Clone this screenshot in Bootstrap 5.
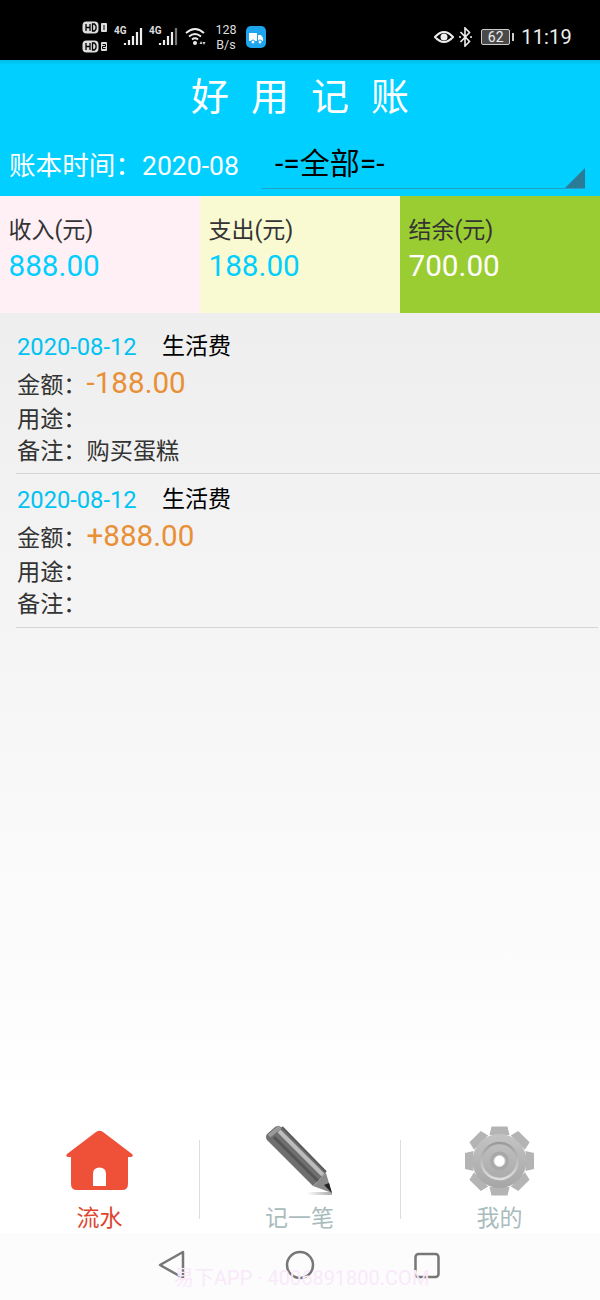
<!DOCTYPE html>
<html lang="zh">
<head>
<meta charset="UTF-8" />
<meta name="viewport" content="width=device-width, initial-scale=1" />
<title>好用记账</title>
<link href="https://cdn.jsdelivr.net/npm/bootstrap@5.3.0/dist/css/bootstrap.min.css" rel="stylesheet" />
<style>
  html, body { height: 1300px; }
  body {
    width: 600px;
    overflow: hidden;
    position: relative;
    font-family: Roboto, "Noto Sans CJK SC", sans-serif;
    background: #fff;
  }
  .status-bar { height: 60px; background: #000; color: #fff; padding: 14px 28px 0 82px; }
  .hd-col { width: 28px; gap: 6px; }
  .net-speed { font-size: 12.5px; line-height: 15px; width: 24px; margin-left: 6px; color: #ddd; text-align: center; }
  .clock { font-size: 20px; letter-spacing: .2px; color: #eee; line-height: 1; }
  .batt { width: 29px; height: 16px; border: 1px solid #ccc; border-radius: 2px; background: #4a4a4a; color: #eee; font-size: 14px; line-height: 14px; text-align: center; }
  .batt-tip { width: 2px; height: 8px; background: #ccc; margin: 0 7px 0 2px; }

  .top-head { height: 136px; background: linear-gradient(#00bde8, #00cfff 5px); color: #fff; }
  .app-title { font-size: 38px; line-height: 44px; letter-spacing: 22px; padding: 15px 0 0 22px; height: 78px; margin: 0; font-weight: 400; text-align: center; }
  .filter-row { height: 58px; }
  .book-time { font-size: 26.6px; line-height: 32px; padding-left: 9px; width: 262px; margin-top: 12px; white-space: nowrap; }
  .book-pick { position: relative; width: 323px; height: 51px; margin-right: 15px; border-bottom: 1px solid #1fa0c4; color: #000; font-size: 30px; line-height: 52px; padding-left: 13px; }
  .book-pick::after { content: ""; position: absolute; right: 0; bottom: 0; border-style: solid; border-width: 0 0 20px 20px; border-color: transparent transparent #2b7b97 transparent; }

  .stat-cell { width: 200px; height: 117px; padding: 19px 9px 0; }
  .stat-in { background: #fff0f5; }
  .stat-out { background: #fafad2; }
  .stat-left { background: #9acd32; }
  .stat-label { font-size: 23px; line-height: 32px; color: #333; margin-left: -.5px; }
  .stat-num { font-size: 29.7px; line-height: 38px; color: #00cfff; margin-left: -.5px; }
  .stat-left .stat-num { color: #fff; }

  .ledger { height: 800px; background: linear-gradient(#eeeeee, #ffffff 790px); padding-left: 16px; padding-top: 18px; }
  .entry { border-bottom: 1px solid #d5d5d5; height: 143px; margin-bottom: 10px; font-size: 23.2px; color: #333; padding-left: 1px; }
  .entry + .entry { height: 144px; margin-right: 2px; }
  .entry-head { line-height: 32px; height: 32px; }
  .entry-date { font-size: 23.7px; color: #00c3f2; width: 145px; }
  .entry-kind { color: #000; font-size: 23px; }
  .entry-row { line-height: 32px; height: 32px; }
  .entry-amt { height: 40px; line-height: 41px; }
  .amt-val { font-size: 29.6px; color: #e98f35; margin-left: 0; }

  .tabbar { height: 120px; background: #fff; }
  .tab { position: relative; width: 200px; height: 120px; text-align: center; font-size: 23px; line-height: 30px; color: #a9bcbc; }
  .tab + .tab::before { content: ""; position: absolute; left: -1px; top: 27px; width: 1px; height: 79px; background: #ddd; }
  .tab + .tab + .tab::before { left: 0; }
  .tab svg { display: block; margin: 0 auto; }
  .tab-label { padding-top: 1px; margin-left: -1px; }
  .tab-on { color: #dd4530; }
  .sys-nav { height: 67px; background: #fcfcfc; padding-top: 12px; }
  .ghost-mark { position: absolute; left: 174px; top: 1265px; font-size: 20px; line-height: 26px; color: #f9e9fb; white-space: nowrap; }
</style>
</head>
<body>

<!-- phone status bar -->
<div class="status-bar d-flex align-items-center">
  <div class="hd-col d-flex flex-column">
    <svg width="28" height="13" viewBox="0 0 28 13"><rect x="0.5" y="0.5" width="16" height="12" rx="4" fill="#ddd"/><path d="M4 3v7M8 3v7M4 6.5h4M10.500 3v7h2l1.500-2v-3l-1.500-2z" fill="none" stroke="#000" stroke-width="1.300"/><rect x="19" y="2" width="6" height="9" rx="1" fill="#ddd"/><path d="M22 4v5" stroke="#000"/></svg>
    <svg width="28" height="13" viewBox="0 0 28 13"><rect x="0.5" y="0.5" width="16" height="12" rx="4" fill="#ddd"/><path d="M4 3v7M8 3v7M4 6.5h4M10.500 3v7h2l1.500-2v-3l-1.500-2z" fill="none" stroke="#000" stroke-width="1.300"/><rect x="19" y="2" width="6" height="9" rx="1" fill="#ddd"/><path d="M20.500 4.500h3v2h-3v2h3" fill="none" stroke="#000"/></svg>
  </div>
  <svg class="ms-1" width="31" height="24" viewBox="0 0 31 24"><text x="0" y="9" font-size="10" font-weight="700" fill="#ddd" font-family="Roboto">4G</text><path d="M11 20v-2M15 20v-5M19 20v-9M23 20v-13M27 20V3" stroke="#eee" stroke-width="2.200"/></svg>
  <svg class="ms-1" width="31" height="24" viewBox="0 0 31 24"><text x="0" y="9" font-size="10" font-weight="700" fill="#ddd" font-family="Roboto">4G</text><path d="M11 20v-2M15 20v-5M19 20v-9M23 20V7" stroke="#eee" stroke-width="2.200"/><path d="M27 20V3" stroke="#777" stroke-width="2.200"/></svg>
  <svg class="ms-1" width="24" height="20" viewBox="0 0 22 20"><path d="M1 6q9-8 18 0M4 9.500q6-5 12 0M7 12.500q3-2.500 6 0" fill="none" stroke="#eee" stroke-width="1.800"/><circle cx="10" cy="16" r="2" fill="#eee"/><path d="M16 14l-1.500 3h3zM19 18l1.500-3h-3z" fill="#ccc"/></svg>
  <div class="net-speed">128<br>B/s</div>
  <svg class="ms-2" width="20" height="22" viewBox="0 0 20 22"><rect width="20" height="22" rx="5" fill="#1da5ee"/><path d="M3 7h8v8H3zM12 9h3l2 3v3h-5z" fill="#fff"/><circle cx="7" cy="16" r="2" fill="#fff" stroke="#1da5ee"/><circle cx="14" cy="16" r="2" fill="#fff" stroke="#1da5ee"/></svg>
  <div class="ms-auto d-flex align-items-center">
    <svg width="20" height="16" viewBox="0 0 20 16"><path d="M1 8q9-10 18 0q-9 10-18 0z" fill="none" stroke="#eee" stroke-width="2"/><circle cx="10" cy="8" r="3.500" fill="#eee"/></svg>
    <svg class="ms-1" width="15" height="20" viewBox="0 0 14 20"><path d="M2 5l9 9.500-4.500 4.500V1L11 5.500 2 15" fill="none" stroke="#eee" stroke-width="1.600"/><circle cx="1.500" cy="10" r="1" fill="#eee"/><circle cx="12.500" cy="10" r="1" fill="#eee"/></svg>
    <div class="batt ms-2">62</div><div class="batt-tip"></div>
    <div class="clock">11:19</div>
  </div>
</div>

<!-- title and filter -->
<div class="top-head">
  <h1 class="app-title">好用记账</h1>
  <div class="filter-row d-flex">
    <div class="book-time">账本时间：2020-08</div>
    <div class="book-pick ms-auto">-=全部=-</div>
  </div>
</div>

<!-- totals -->
<div class="d-flex">
  <div class="stat-cell stat-in"><div class="stat-label">收入(元)</div><div class="stat-num">888.00</div></div>
  <div class="stat-cell stat-out"><div class="stat-label">支出(元)</div><div class="stat-num">188.00</div></div>
  <div class="stat-cell stat-left"><div class="stat-label">结余(元)</div><div class="stat-num">700.00</div></div>
</div>

<!-- entries -->
<div class="ledger">
  <div class="entry">
    <div class="entry-head d-flex"><span class="entry-date">2020-08-12</span><span class="entry-kind">生活费</span></div>
    <div class="entry-amt">金额：<span class="amt-val">-188.00</span></div>
    <div class="entry-row">用途：</div>
    <div class="entry-row">备注：购买蛋糕</div>
  </div>
  <div class="entry">
    <div class="entry-head d-flex"><span class="entry-date">2020-08-12</span><span class="entry-kind">生活费</span></div>
    <div class="entry-amt">金额：<span class="amt-val">+888.00</span></div>
    <div class="entry-row">用途：</div>
    <div class="entry-row">备注：</div>
  </div>
</div>

<!-- bottom tabs -->
<div class="tabbar d-flex">
  <div class="tab tab-on">
    <svg width="70" height="90" viewBox="0 0 70 90">
      <path d="M31 19q3.500-2.500 7 0L67 41q2 2-1 3h-3v27q0 6-6 6H12q-6 0-6-6V44H3q-3-1-1-3z" fill="#ef5138"/>
      <path d="M28 73V61q0-6.500 6.500-6.500T41 61v12z" fill="#fff"/>
    </svg>
    <div class="tab-label">流水</div>
  </div>
  <div class="tab">
    <svg width="70" height="90" viewBox="0 0 70 90">
      <defs>
        <linearGradient id="floorShade" x1="0" y1="0" x2="1" y2="0"><stop offset="0" stop-color="#fff"/><stop offset="1" stop-color="#aaa"/></linearGradient>
      </defs>
      <rect x="42" y="79" width="25" height="3" fill="url(#floorShade)"/>
      <!-- barrel -->
      <path d="M2 27q-2-3 0-6l8-7q3-2 6 0l45 46-13 13z" fill="#6f6f6f"/>
      <path d="M9 24l44 44" stroke="#555" stroke-width="3" fill="none"/>
      <path d="M14 18l44 44" stroke="#bdbdbd" stroke-width="4" fill="none"/>
      <path d="M17 14l44 45" stroke="#585858" stroke-width="2" fill="none"/>
      <path d="M4 23l11-9" stroke="#9a9a9a" stroke-width="4" fill="none"/>
      <!-- sharpened end -->
      <path d="M61 60l-13 13 19 7z" fill="#8a8a8a"/>
      <path d="M59 72l8 8-3-10z" fill="#222"/>
    </svg>
    <div class="tab-label">记一笔</div>
  </div>
  <div class="tab">
    <svg width="70" height="90" viewBox="0 0 70 90">
      <defs>
        <linearGradient id="gearFace" x1="0" y1="-27" x2="0" y2="27" gradientUnits="userSpaceOnUse"><stop offset="0" stop-color="#c4c4c4"/><stop offset="1" stop-color="#a6a6a6"/></linearGradient>
        <linearGradient id="gearRing" x1="0" y1="-19" x2="0" y2="19" gradientUnits="userSpaceOnUse"><stop offset="0" stop-color="#999"/><stop offset="1" stop-color="#e0e0e0"/></linearGradient>
      </defs>
      <g transform="translate(34.500 48)">
        <g fill="#b4b4b4">
          <path id="gearTooth" d="M-10-26L-8-34.500H8L10-26z"/>
          <use href="#gearTooth" transform="rotate(45)"/>
          <use href="#gearTooth" transform="rotate(90)"/>
          <use href="#gearTooth" transform="rotate(135)"/>
          <use href="#gearTooth" transform="rotate(180)"/>
          <use href="#gearTooth" transform="rotate(225)"/>
          <use href="#gearTooth" transform="rotate(270)"/>
          <use href="#gearTooth" transform="rotate(315)"/>
        </g>
        <circle r="27" fill="url(#gearFace)"/>
        <circle r="18" fill="none" stroke="url(#gearRing)" stroke-width="2.500"/>
        <circle r="9.500" fill="#a8a8a8"/>
        <circle r="5.500" fill="#fff" stroke="#ddd"/>
      </g>
    </svg>
    <div class="tab-label">我的</div>
  </div>
</div>

<!-- system navigation keys -->
<div class="sys-nav d-flex justify-content-center align-items-start">
  <svg width="320" height="40" viewBox="0 0 320 40">
    <g fill="none" stroke="#777" stroke-width="2.500" stroke-linejoin="round">
      <path d="M43 7v26L20 20z"/>
      <circle cx="160" cy="20" r="13"/>
      <rect x="275.500" y="9" width="23" height="23" rx="3"/>
    </g>
  </svg>
</div>
<div class="ghost-mark">易下APP · 4006891800.COM</div>

</body>
</html>
